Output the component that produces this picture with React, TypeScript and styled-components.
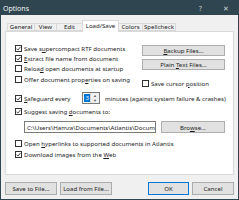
import styled, { createGlobalStyle } from "styled-components";

const Global = createGlobalStyle`
  html, body {
    margin: 0;
    padding: 0;
    background: #ffffff;
  }
  body {
    font-family: "Noto Sans", "Open Sans", sans-serif;
    font-size: 6.1px;
    color: #1c1c1c;
  }
`;

const Window = styled.div`
  width: 239px;
  height: 200px;
  box-sizing: border-box;
  border: 1px solid #2f4650;
  background: #f0f0f0;
  display: flex;
  flex-direction: column;
  overflow: hidden;
`;

const TitleBar = styled.div`
  height: 14px;
  background: #2f4650;
  color: #f4f6f7;
  display: flex;
  align-items: center;
  padding: 0 0 0 2px;
  font-size: 7px;
`;

const Title = styled.span`
  flex: 1;
`;

const TitleButton = styled.span`
  width: 25px;
  text-align: center;
  font-size: 6.5px;
  color: #c9d3d7;
`;

const Body = styled.div`
  flex: 1;
  display: flex;
  flex-direction: column;
  padding: 5px 4px 0 4px;
`;

const TabStrip = styled.div`
  display: flex;
  align-items: flex-end;
  height: 11px;
  padding-left: 3px;
  position: relative;
  z-index: 1;
`;

const Tab = styled.div<{ $w: number; $active?: boolean }>`
  width: ${(p) => p.$w}px;
  height: ${(p) => (p.$active ? 12 : 8)}px;
  box-sizing: border-box;
  border: 1px solid #d9d9d9;
  border-bottom: ${(p) => (p.$active ? "none" : "1px solid #d9d9d9")};
  margin-left: -1px;
  margin-bottom: ${(p) => (p.$active ? -1 : 0)}px;
  background: ${(p) => (p.$active ? "#ffffff" : "#f0f0f0")};
  display: flex;
  align-items: center;
  justify-content: center;
  line-height: 1;
  padding-bottom: ${(p) => (p.$active ? 1 : 0)}px;
  white-space: nowrap;
`;

const Panel = styled.div`
  height: 144px;
  box-sizing: border-box;
  border: 1px solid #d9d9d9;
  background: #ffffff;
  padding: 11px 8px 0 9px;
  display: flex;
  flex-direction: column;
`;

const TopSection = styled.div`
  display: flex;
  justify-content: space-between;
`;

const LeftColumn = styled.div`
  display: flex;
  flex-direction: column;
`;

const RightColumn = styled.div`
  width: 83px;
  display: flex;
  flex-direction: column;
  gap: 3px;
  padding-top: 2px;
`;

const Row = styled.label<{ $mt?: number; $h?: number }>`
  display: flex;
  align-items: center;
  height: ${(p) => p.$h ?? 10}px;
  gap: 2px;
  margin-top: ${(p) => p.$mt ?? 0}px;
  white-space: nowrap;
`;

const Box = styled.span`
  width: 7px;
  height: 7px;
  box-sizing: border-box;
  border: 1px solid #333333;
  background: #ffffff;
  display: flex;
  align-items: center;
  justify-content: center;
  flex: none;
`;

const Key = styled.span`
  text-decoration: underline;
`;

const Button = styled.div<{ $w?: number; $h?: number; $focus?: boolean }>`
  width: ${(p) => (p.$w ? `${p.$w}px` : "auto")};
  height: ${(p) => p.$h ?? 11}px;
  box-sizing: border-box;
  border: 1px solid ${(p) => (p.$focus ? "#0078d7" : "#adadad")};
  background: #e1e1e1;
  display: flex;
  align-items: center;
  justify-content: center;
  white-space: nowrap;
  flex: none;
`;

const Gap = styled.span<{ $w: number }>`
  width: ${(p) => p.$w}px;
  flex: none;
`;

const SpinBox = styled.div`
  width: 24px;
  height: 12px;
  box-sizing: border-box;
  border: 1px solid #7a7a7a;
  display: flex;
  margin: 0 3px 0 0;
`;

const SpinValue = styled.div`
  flex: 1;
  display: flex;
  align-items: center;
  padding-left: 1px;
  span {
    background: #0078d7;
    color: #fff;
    padding: 0 1px;
    line-height: 8px;
  }
`;

const SpinArrows = styled.div`
  width: 8px;
  border-left: 1px solid #d0d0d0;
  background: #f0f0f0;
  display: flex;
  flex-direction: column;
  justify-content: space-around;
  align-items: center;
  font-size: 4px;
  color: #606060;
`;

const PathRow = styled.div`
  display: flex;
  align-items: center;
  margin: 5px 0 0 9px;
  gap: 5px;
`;

const PathField = styled.div`
  width: 133px;
  height: 12px;
  box-sizing: border-box;
  border: 1px solid #7a7a7a;
  padding-left: 2px;
  display: flex;
  align-items: center;
  white-space: nowrap;
  overflow: hidden;
`;

const Footer = styled.div`
  display: flex;
  align-items: center;
  margin-top: 6px;
  height: 14px;
  gap: 3px;
`;

const Spacer = styled.div`
  flex: 1;
`;

function Check({ checked }: { checked?: boolean }) {
  return (
    <Box>
      {checked && (
        <svg width="5" height="5" viewBox="0 0 5 5">
          <path d="M0.4 2.6 L1.9 4.1 L4.6 0.8" fill="none" stroke="#222" strokeWidth="0.8" />
        </svg>
      )}
    </Box>
  );
}

function App() {
  return (
    <>
      <Global />
      <Window>
        <TitleBar>
          <Title>Options</Title>
          <TitleButton>?</TitleButton>
          <TitleButton>✕</TitleButton>
        </TitleBar>
        <Body>
          <TabStrip>
            <Tab $w={28}>General</Tab>
            <Tab $w={23}>View</Tab>
            <Tab $w={27}>Edit</Tab>
            <Tab $w={37} $active>Load/Save</Tab>
            <Tab $w={25}>Colors</Tab>
            <Tab $w={34}>Spellcheck</Tab>
          </TabStrip>
          <Panel>
            <TopSection>
              <LeftColumn>
                <Row>
                  <Check checked />
                  <span>Save s<Key>u</Key>percompact RTF documents</span>
                </Row>
                <Row>
                  <Check checked />
                  <span><Key>E</Key>xtract file name from document</span>
                </Row>
                <Row>
                  <Check />
                  <span>Reloa<Key>d</Key> open documents at startup</span>
                </Row>
                <Row $mt={1}>
                  <Check />
                  <span>Offer document prop<Key>e</Key>rties on saving</span>
                </Row>
              </LeftColumn>
              <RightColumn>
                <Button><span><Key>B</Key>ackup Files...</span></Button>
                <Button><span>Plain <Key>T</Key>ext Files...</span></Button>
                <Row $mt={5}>
                  <Check />
                  <span>Save cursor <Key>p</Key>osition</span>
                </Row>
              </RightColumn>
            </TopSection>
            <Row $mt={4} $h={12}>
              <Check checked />
              <span><Key>S</Key>afeguard every</span>
              <Gap $w={8} />
              <SpinBox>
                <SpinValue><span>3</span></SpinValue>
                <SpinArrows>
                  <span>▲</span>
                  <span>▼</span>
                </SpinArrows>
              </SpinBox>
              <span>minutes (against system failure &amp; crashes)</span>
            </Row>
            <Row $mt={2}>
              <Check checked />
              <span>Suggest saving <Key>d</Key>ocuments to:</span>
            </Row>
            <PathRow>
              <PathField>C:\Users\Hamza\Documents\Atlantis\Documen</PathField>
              <Button $w={64} $h={12}><span>Bro<Key>w</Key>se...</span></Button>
            </PathRow>
            <Row $mt={5}>
              <Check />
              <span>Open <Key>h</Key>yperlinks to supported documents in Atlantis</span>
            </Row>
            <Row $mt={1}>
              <Check checked />
              <span>Download images from the <Key>W</Key>eb</span>
            </Row>
          </Panel>
          <Footer>
            <Button $w={52} $h={13}>Save to File...</Button>
            <Button $w={52} $h={13}>Load from File...</Button>
            <Spacer />
            <Button $w={41} $h={13} $focus>OK</Button>
            <Button $w={42} $h={13}>Cancel</Button>
          </Footer>
        </Body>
      </Window>
    </>
  );
}

export default App;
